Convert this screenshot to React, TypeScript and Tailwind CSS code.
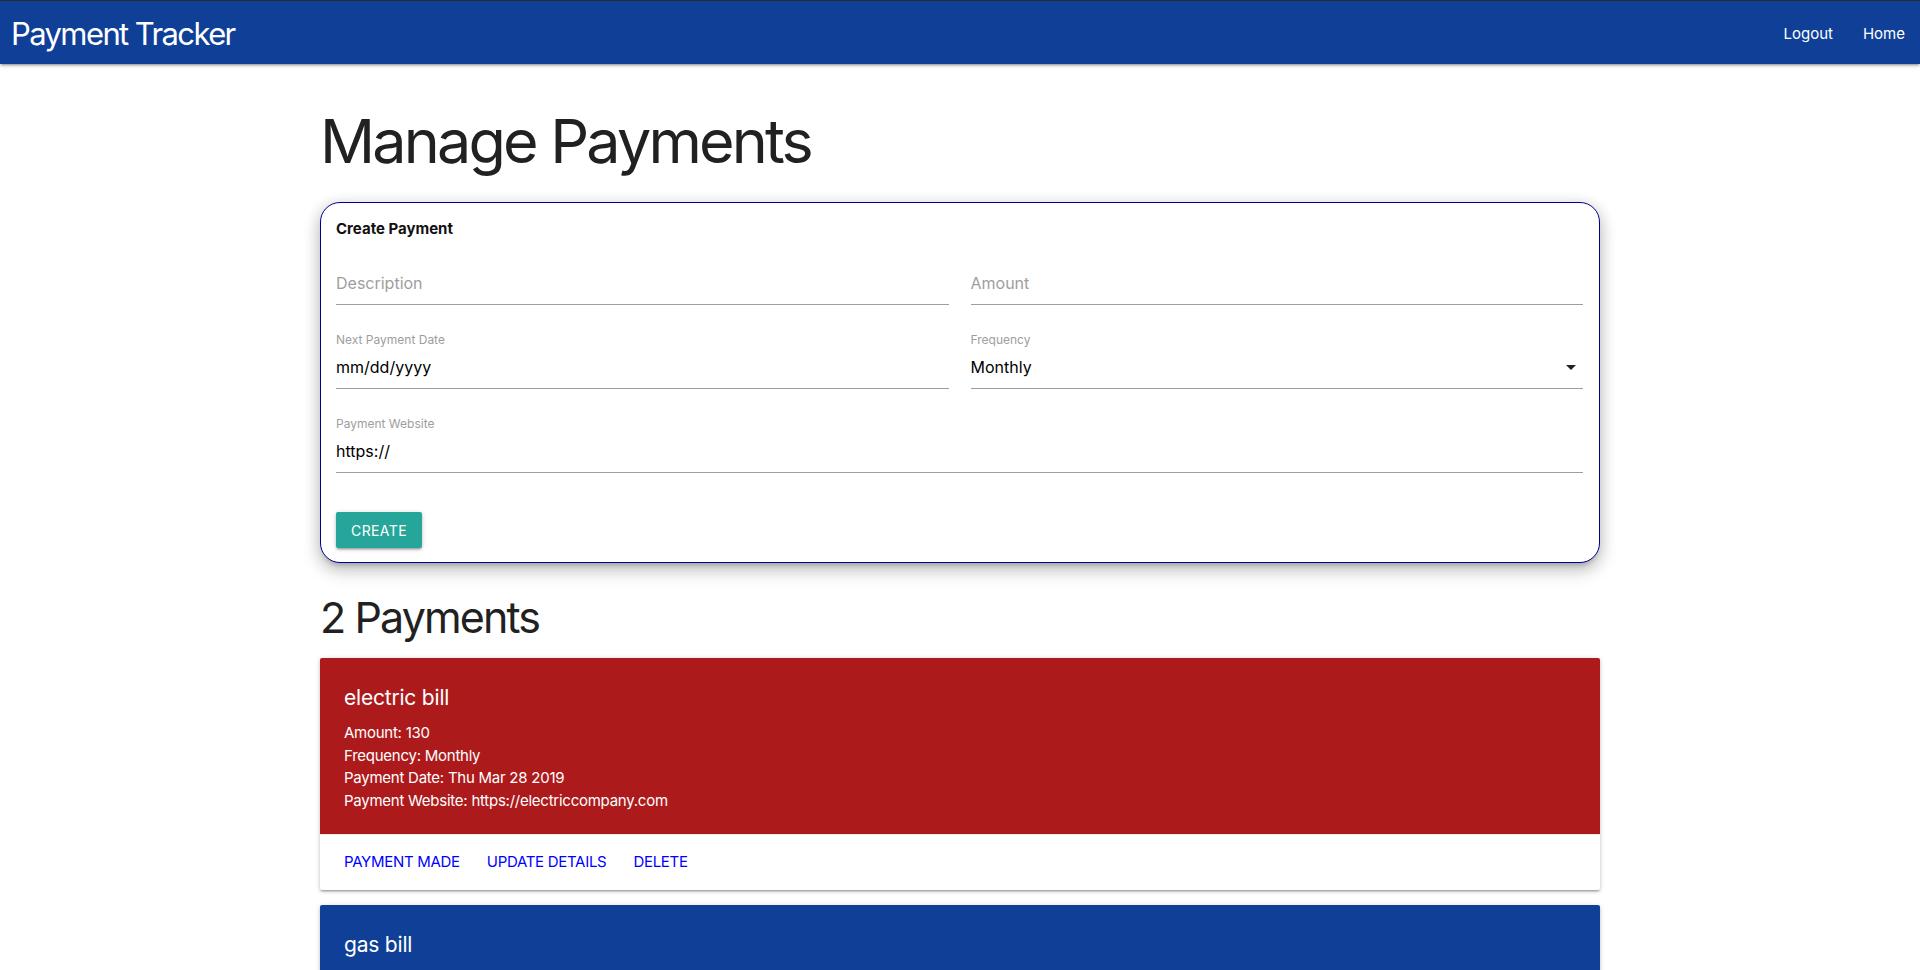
import React from 'react';

type Payment = {
  description: string;
  amount: number;
  frequency: string;
  date: string;
  website: string;
  overdue: boolean;
};

const PAYMENTS: Payment[] = [
  {
    description: 'electric bill',
    amount: 130,
    frequency: 'Monthly',
    date: 'Thu Mar 28 2019',
    website: 'https://electriccompany.com',
    overdue: true,
  },
  {
    description: 'gas bill',
    amount: 60,
    frequency: 'Monthly',
    date: 'Mon Apr 15 2019',
    website: 'https://gascompany.com',
    overdue: false,
  },
];

const FONT = "font-['Inter','Liberation_Sans',sans-serif]";

const Field: React.FC<{ label?: string; placeholder?: string; value?: string; select?: boolean }> = ({
  label,
  placeholder,
  value,
  select,
}) => (
  <div className="flex flex-col">
    <label className="h-3 text-[12px] leading-3 text-[#9e9e9e]">{label}</label>
    <div className="relative flex h-[43px] items-center border-b border-[#9e9e9e]">
      {select ? (
        <>
          <span className="text-[16px] text-black">{value}</span>
          <svg className="absolute right-0 top-[9px]" width="24" height="24" viewBox="0 0 24 24">
            <path d="M7 10l5 5 5-5z" fill="#222" />
          </svg>
        </>
      ) : (
        <input
          className="w-full bg-transparent text-[16px] text-black outline-none placeholder:text-[#9e9e9e]"
          placeholder={placeholder}
          defaultValue={value}
        />
      )}
    </div>
  </div>
);

const PaymentCard: React.FC<{ payment: Payment }> = ({ payment }) => (
  <div className="mb-[15px] overflow-hidden rounded-[2px] bg-white shadow-[0_2px_2px_0_rgba(0,0,0,0.14),0_3px_1px_-2px_rgba(0,0,0,0.12),0_1px_5px_0_rgba(0,0,0,0.2)]">
    <div className={`px-6 pt-6 pb-[22px] text-white ${payment.overdue ? 'bg-[#ad1a1c]' : 'bg-[#0f3f97]'}`}>
      <div className="mb-2 text-[21px] leading-8 tracking-[-0.2px]">{payment.description}</div>
      <div className="text-[15px] leading-[22.5px] tracking-[-0.25px]">
        <div>Amount: {payment.amount}</div>
        <div>Frequency: {payment.frequency}</div>
        <div>Payment Date: {payment.date}</div>
        <div>Payment Website: {payment.website}</div>
      </div>
    </div>
    <div className="flex gap-[27px] border-t border-[rgba(160,160,160,0.2)] px-6 py-4 text-[15px] uppercase leading-[22.5px] tracking-[-0.3px] text-[#0000ff]">
      <a href="#">Payment Made</a>
      <a href="#">Update Details</a>
      <a href="#">Delete</a>
    </div>
  </div>
);

const App: React.FC = () => {
  return (
    <div className={`min-h-screen bg-white ${FONT}`}>
      <nav className="flex h-16 items-center justify-between border-t border-[#2b2b2b] bg-[#0f3f97] pt-1 text-white shadow-[0_2px_2px_0_rgba(0,0,0,0.14),0_3px_1px_-2px_rgba(0,0,0,0.12),0_1px_5px_0_rgba(0,0,0,0.2)]">
        <span className="pl-[11px] text-[31px] tracking-[-1.6px]">Payment Tracker</span>
        <div className="flex text-[15px]">
          <a href="#" className="px-[15px]">Logout</a>
          <a href="#" className="px-[15px]">Home</a>
        </div>
      </nav>

      <main className="mx-auto w-[1280px]">
        <h1 className="mt-[44px] mb-[27px] text-[61px] leading-[1.1] tracking-[-2.8px] text-[#212121]">Manage Payments</h1>

        <div className="rounded-[20px] border border-[#00008b] bg-white pt-[15px] pr-[16px] pb-[14px] pl-[15px] shadow-[0_8px_17px_2px_rgba(0,0,0,0.14),0_3px_14px_2px_rgba(0,0,0,0.12),0_5px_5px_-3px_rgba(0,0,0,0.2)]">
          <div className="text-[15px] font-bold leading-[22px] text-[#111]">Create Payment</div>
          <div className="mt-[10px] grid grid-cols-2 gap-x-[22px] gap-y-[29px]">
            <Field placeholder="Description" />
            <Field placeholder="Amount" />
            <Field label="Next Payment Date" value="mm/dd/yyyy" />
            <Field label="Frequency" value="Monthly" select />
            <div className="col-span-2">
              <Field label="Payment Website" value="https://" />
            </div>
          </div>
          <button className="mt-[39px] h-9 rounded-[2px] bg-[#26a69a] px-[15px] text-[14px] uppercase tracking-[0.4px] text-white shadow-[0_2px_2px_0_rgba(0,0,0,0.14),0_3px_1px_-2px_rgba(0,0,0,0.12),0_1px_5px_0_rgba(0,0,0,0.2)]">
            Create
          </button>
        </div>

        <h3 className="mt-[31px] mb-[17px] text-[43px] leading-[1.1] tracking-[-1.9px] text-[#212121]">{PAYMENTS.length} Payments</h3>

        {PAYMENTS.map((p) => (
          <PaymentCard key={p.description} payment={p} />
        ))}
      </main>
    </div>
  );
};

export default App;
